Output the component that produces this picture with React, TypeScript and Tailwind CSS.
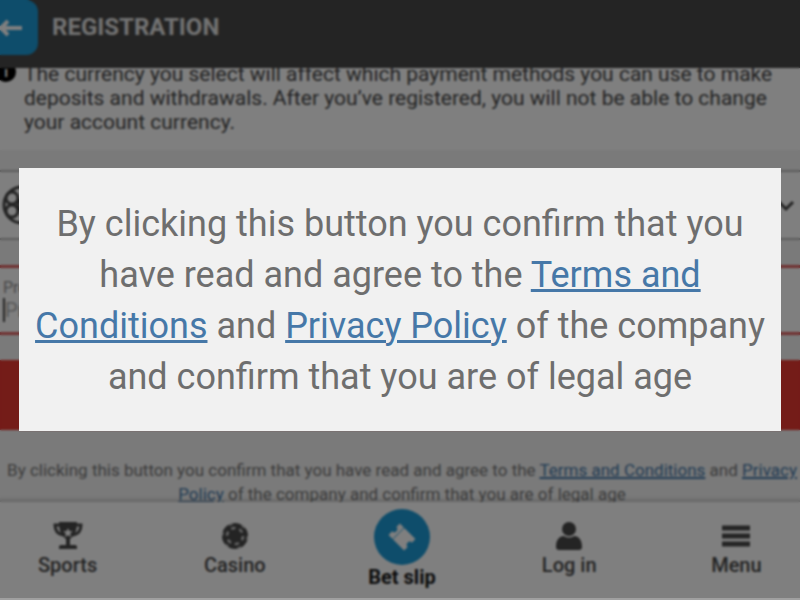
import React from "react";

const navItem =
  "flex flex-col items-center gap-px pt-[18px] text-xl leading-6 font-medium text-[#484848]";

const TrophyIcon = () => (
  <svg className="h-8 w-8" viewBox="0 0 32 32" fill="none">
    <path d="M9 5H3c0 6 3 9 8 10M23 5h6c0 6-3 9-8 10" stroke="#484848" strokeWidth="3" />
    <path
      d="M7 2h18c0 9-2 13-7 17v6h5c2 0 2 1 2 4H7c0-3 0-4 2-4h5v-6C9 15 7 11 7 2z"
      fill="#484848"
    />
    <path d="M16 8l1.300 3 3.500.3-2.600 2.300.8 3.400-3-1.800-3 1.800.8-3.400-2.600-2.300 3.500-.3z" fill="#fff" />
  </svg>
);

const ChipIcon = () => (
  <svg className="h-8 w-8" viewBox="0 0 32 32" fill="none">
    <circle cx="16" cy="16" r="13" fill="#484848" />
    <circle cx="16" cy="16" r="8" stroke="#ccc" strokeWidth="2.500" strokeDasharray="4.400 3.980" />
    <circle
      cx="16"
      cy="16"
      r="12.500"
      stroke="#ccc"
      strokeWidth="1.500"
      strokeDasharray="4 9.090"
    />
  </svg>
);

const TicketIcon = () => (
  <svg className="h-8 w-8" viewBox="0 0 32 32">
    <g transform="rotate(45 16 16)">
      <path d="M5 8h22v5a3 3 0 0 0 0 6v5H5v-5a3 3 0 0 0 0-6z" fill="#fff" />
      <path d="M11 8v16" stroke="#1c9ad6" strokeWidth="1" strokeDasharray="2 1" />
    </g>
  </svg>
);

const UserIcon = () => (
  <svg className="h-8 w-8" viewBox="0 0 32 32" fill="#484848">
    <circle cx="16" cy="9" r="7" />
    <path d="M3 27c0-7 3-11 8-11 3 2 7 2 10 0 5 0 8 4 8 11 0 2-1 3-3 3H6c-2 0-3-1-3-3z" />
  </svg>
);

const MenuIcon = () => (
  <svg className="h-8 w-8" viewBox="0 0 32 32" stroke="#484848" strokeWidth="5">
    <path d="M2 8h28M2 16h28M2 24h28" />
  </svg>
);

const BallIcon = () => (
  <svg
    className="h-10 w-10 shrink-0"
    viewBox="0 0 40 40"
    fill="none"
    stroke="#484848"
    strokeWidth="3"
  >
    <circle cx="20" cy="20" r="18" />
    <circle cx="10" cy="13" r="6" />
    <circle cx="10" cy="26" r="6" />
    <circle cx="22" cy="20" r="6" />
    <circle cx="29" cy="9" r="6" />
    <circle cx="29" cy="31" r="6" />
  </svg>
);

const RegistrationPage = () => {
  return (
    <div className="flex h-screen flex-col overflow-hidden bg-[#f4f4f4]">
      <header className="flex h-[68px] shrink-0 items-start bg-[#484848]">
        <button
          type="button"
          aria-label="Back"
          className="-ml-4 flex h-[55px] w-[54px] items-center justify-center rounded-xl bg-[#1c9ad6]"
        >
          <svg className="h-8 w-8" viewBox="0 0 32 32" fill="none" stroke="#fff" strokeWidth="4">
            <path d="M27 16H6M13 9l-7 7 7 7" />
          </svg>
        </button>
        <h1 className="ml-[14px] text-2xl leading-[54px] font-bold text-[#e4e4e4]">REGISTRATION</h1>
      </header>

      <main className="flex min-h-0 flex-1 flex-col overflow-hidden">
        <section className="-mt-[6px] flex shrink-0 gap-2 bg-white pb-4 text-[#484848]">
          <span className="-ml-1 flex h-5 w-5 shrink-0 items-center justify-center rounded-full bg-black text-sm font-bold text-white">
            i
          </span>
          <p className="text-[21px] leading-6">
            The currency you select will affect which payment methods you can use to make deposits
            and withdrawals. After you’ve registered, you will not be able to change your account
            currency.
          </p>
        </section>

        <form className="flex flex-col pt-5">
          <button
            type="button"
            aria-label="Select bonus"
            className="-mx-4 flex h-[70px] items-center justify-between border-2 border-[#b8b8b8] bg-white px-4"
          >
            <BallIcon />
            <svg className="h-6 w-6" viewBox="0 0 24 24" fill="none" stroke="#484848" strokeWidth="3">
              <path d="M5 9l7 7 7-7" />
            </svg>
          </button>
          <div className="-mx-4 mt-[25px] flex h-[70px] flex-col justify-center border-3 border-[#e06060] bg-white px-4 text-[#909090]">
            <label htmlFor="promo" className="text-base leading-5">
              Promo code
            </label>
            <input
              id="promo"
              type="text"
              placeholder="Promo code"
              className="border-l-2 border-[#484848] text-xl leading-6 outline-none placeholder:text-[#b0b0b0]"
            />
          </div>
          <button
            type="button"
            aria-label="Register"
            className="-mx-4 mt-[25px] h-[70px] bg-[#e83830]"
          />
          <p className="-mr-5 -ml-4 mt-7 text-center text-[17px] leading-6 text-[#787878]">
            By clicking this button you confirm that you have read and agree to the{" "}
            <a href="#terms" className="text-[#4678a8] underline decoration-2">
              Terms and Conditions
            </a>{" "}
            and{" "}
            <a href="#privacy" className="text-[#4678a8] underline decoration-2">
              Privacy Policy
            </a>{" "}
            of the company and confirm that you are of legal age
          </p>
        </form>
      </main>

      <nav className="-mr-5 -ml-4 grid h-[98px] shrink-0 grid-cols-5 bg-white shadow-[0_-2px_4px_#00000033]">
        <button type="button" className={navItem}>
          <TrophyIcon />
          Sports
        </button>
        <button type="button" className={navItem}>
          <ChipIcon />
          Casino
        </button>
        <button
          type="button"
          className="flex flex-col items-center pt-[7px] text-xl leading-6 font-bold text-[#181818]"
        >
          <span className="flex h-14 w-14 items-center justify-center rounded-full bg-[#1c9ad6]">
            <TicketIcon />
          </span>
          Bet slip
        </button>
        <button type="button" className={navItem}>
          <UserIcon />
          Log in
        </button>
        <button type="button" className={navItem}>
          <MenuIcon />
          Menu
        </button>
      </nav>
    </div>
  );
};

const App = () => {
  return (
    <div className="relative font-[Roboto,sans-serif]">
      <RegistrationPage />
      <div className="absolute inset-0 flex items-center border-b-2 border-[#a0a0a0] bg-black/50 px-[19px] pt-px backdrop-blur-[1px]">
        <div
          role="dialog"
          aria-label="Terms"
          className="w-full bg-[#f1f1f1] px-3 pt-[31px] pb-7 text-center text-4xl leading-[51px] text-[#6e6e6e]"
        >
          By clicking this button you confirm that you have read and agree to the{" "}
          <a href="#terms" className="text-[#4678a8] underline decoration-3">
            Terms and Conditions
          </a>{" "}
          and{" "}
          <a href="#privacy" className="text-[#4678a8] underline decoration-3">
            Privacy Policy
          </a>{" "}
          of the company and confirm that you are of legal age
        </div>
      </div>
    </div>
  );
};

export default App;
